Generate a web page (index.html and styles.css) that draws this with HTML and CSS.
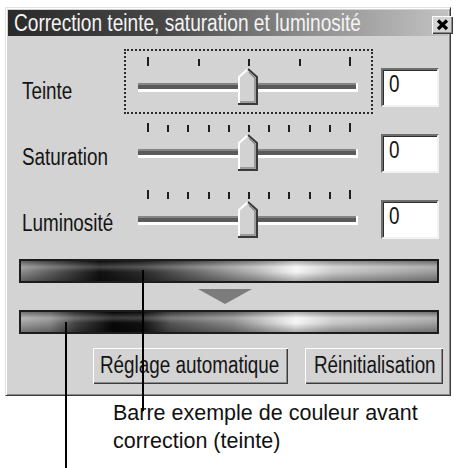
FILE: index.html
```html
<!DOCTYPE html>
<html>
<head>
<meta charset="utf-8">
<link rel="stylesheet" href="styles.css">
</head>
<body>
<div class="page">
  <div class="dialog">
    <div class="titlebar">
      <span class="title"><span class="narrow">Correction teinte, saturation et luminosité</span></span>
      <span class="close"><svg width="21" height="18" viewBox="0 0 21 18"><path d="M6 4.5 L15 13 M15 4.5 L6 13" stroke="#000" stroke-width="3.2" fill="none"/></svg></span>
    </div>
    <div class="rows">
      <div class="row">
        <div class="label"><span class="narrow">Teinte</span></div>
        <div class="slider focus">
          <svg width="249" height="65" viewBox="0 0 249 65">
            <g fill="#1e1e1e">
              <rect x="23" y="8" width="2" height="9"/>
              <rect x="74" y="10" width="2" height="7"/>
              <rect x="124" y="10" width="2" height="7"/>
              <rect x="175" y="10" width="2" height="7"/>
              <rect x="225" y="8" width="2" height="9"/>
            </g>
            <rect x="14" y="34" width="220" height="9" fill="#fff"/>
            <rect x="14" y="34" width="218" height="6" fill="#5a5a5a"/>
            <rect x="14" y="34" width="218" height="2" fill="#858585"/>
            <polygon points="114,28 124,19 134,28 134,56 114,56" fill="#d2d2d2"/>
            <polyline points="115,56 115,28 124,20" stroke="#fff" stroke-width="2" fill="none"/>
            <polyline points="124,20 133,28 133,55 114,55" stroke="#3a3a3a" stroke-width="2" fill="none"/>
            <polyline points="125,23 131,29 131,53 116,53" stroke="#8a8a8a" stroke-width="1.5" fill="none"/>
          </svg>
        </div>
        <div class="field"><span class="narrow">0</span></div>
      </div>
      <div class="row">
        <div class="label"><span class="narrow">Saturation</span></div>
        <div class="slider">
          <svg width="249" height="65" viewBox="0 0 249 65">
            <g fill="#1e1e1e">
              <rect x="23" y="8" width="2" height="9"/>
              <rect x="43" y="10" width="2" height="7"/>
              <rect x="63" y="10" width="2" height="7"/>
              <rect x="84" y="10" width="2" height="7"/>
              <rect x="104" y="10" width="2" height="7"/>
              <rect x="124" y="10" width="2" height="7"/>
              <rect x="144" y="10" width="2" height="7"/>
              <rect x="164" y="10" width="2" height="7"/>
              <rect x="185" y="10" width="2" height="7"/>
              <rect x="205" y="10" width="2" height="7"/>
              <rect x="225" y="8" width="2" height="9"/>
            </g>
            <rect x="14" y="34" width="220" height="9" fill="#fff"/>
            <rect x="14" y="34" width="218" height="6" fill="#5a5a5a"/>
            <rect x="14" y="34" width="218" height="2" fill="#858585"/>
            <polygon points="114,28 124,19 134,28 134,56 114,56" fill="#d2d2d2"/>
            <polyline points="115,56 115,28 124,20" stroke="#fff" stroke-width="2" fill="none"/>
            <polyline points="124,20 133,28 133,55 114,55" stroke="#3a3a3a" stroke-width="2" fill="none"/>
            <polyline points="125,23 131,29 131,53 116,53" stroke="#8a8a8a" stroke-width="1.5" fill="none"/>
          </svg>
        </div>
        <div class="field"><span class="narrow">0</span></div>
      </div>
      <div class="row">
        <div class="label"><span class="narrow">Luminosité</span></div>
        <div class="slider">
          <svg width="249" height="65" viewBox="0 0 249 65">
            <g fill="#1e1e1e">
              <rect x="23" y="9" width="2" height="9"/>
              <rect x="43" y="11" width="2" height="7"/>
              <rect x="63" y="11" width="2" height="7"/>
              <rect x="84" y="11" width="2" height="7"/>
              <rect x="104" y="11" width="2" height="7"/>
              <rect x="124" y="11" width="2" height="7"/>
              <rect x="144" y="11" width="2" height="7"/>
              <rect x="164" y="11" width="2" height="7"/>
              <rect x="185" y="11" width="2" height="7"/>
              <rect x="205" y="11" width="2" height="7"/>
              <rect x="225" y="9" width="2" height="9"/>
            </g>
            <rect x="14" y="35" width="220" height="9" fill="#fff"/>
            <rect x="14" y="35" width="218" height="6" fill="#5a5a5a"/>
            <rect x="14" y="35" width="218" height="2" fill="#858585"/>
            <polygon points="114,29 124,20 134,29 134,57 114,57" fill="#d2d2d2"/>
            <polyline points="115,57 115,29 124,21" stroke="#fff" stroke-width="2" fill="none"/>
            <polyline points="124,21 133,29 133,56 114,56" stroke="#3a3a3a" stroke-width="2" fill="none"/>
            <polyline points="125,24 131,30 131,54 116,54" stroke="#8a8a8a" stroke-width="1.5" fill="none"/>
          </svg>
        </div>
        <div class="field"><span class="narrow">0</span></div>
      </div>
    </div>
    <div class="bar bar-before"></div>
    <div class="arrow"></div>
    <div class="bar bar-after"></div>
    <div class="buttons">
      <div class="btn btn-auto"><span class="narrow">Réglage automatique</span></div>
      <div class="btn btn-reset"><span class="narrow">Réinitialisation</span></div>
    </div>
  </div>
  <div class="caption">Barre exemple de couleur avant<br>correction (teinte)</div>
  <div class="leader leader-before"></div>
  <div class="leader leader-after"></div>
</div>
</body>
</html>
```

FILE: styles.css
```css
html, body {
  margin: 0;
  padding: 0;
  background: #ffffff;
}

.page {
  position: relative;
  width: 454px;
  height: 468px;
  overflow: hidden;
  font-family: "Liberation Sans", Arial, sans-serif;
  color: #151515;
}

.narrow {
  display: inline-block;
  transform: scaleX(0.82);
  transform-origin: left center;
  white-space: nowrap;
}

.dialog {
  margin: 7px 0 0 5px;
  width: 446px;
  box-sizing: border-box;
  background: #d3d3d3;
  border: 1px solid;
  border-color: #e2e2e2 #3c3c3c #3c3c3c #e2e2e2;
  box-shadow: inset 1px 1px 0 #ffffff, inset -1px -1px 0 #8a8a8a;
  padding: 1px 1px 11px 1px;
}

.titlebar {
  margin: 1px 1px 0 1px;
  height: 26px;
  display: flex;
  justify-content: space-between;
  background: linear-gradient(to right, #2a2a2a 0%, #474747 35%, #8e8e8e 68%, #c2c2c2 100%);
}

.title {
  padding-left: 6px;
  font-size: 23px;
  line-height: 27px;
  color: #f4f4f4;
  white-space: nowrap;
}

.title .narrow {
  transform: scaleX(0.83);
}

.close {
  align-self: flex-end;
  margin: 0 2px 2px 0;
  width: 21px;
  height: 18px;
  box-sizing: border-box;
  background: #d3d3d3;
  box-shadow: inset 1px 1px 0 #ffffff, inset -1px -1px 0 #3c3c3c, inset -2px -2px 0 #8a8a8a;
}

.close svg {
  display: block;
}

.rows {
  margin-top: 13px;
  padding-left: 12px;
}

.row {
  display: flex;
  height: 66px;
}

.label {
  width: 102px;
  padding-left: 3px;
  padding-top: 29px;
  font-size: 23px;
  line-height: 26px;
  white-space: nowrap;
}

.slider {
  width: 249px;
  height: 65px;
}

.slider svg {
  display: block;
}

.focus {
  outline: 2px dotted #2a2a2a;
  outline-offset: -2px;
}

.field {
  margin-left: 8px;
  margin-top: 19px;
  width: 58px;
  height: 39px;
  box-sizing: border-box;
  background: #ffffff;
  border: 2px solid;
  border-color: #6e6e6e #f2f2f2 #f2f2f2 #6e6e6e;
  box-shadow: inset 1px 1px 0 #2e2e2e;
  padding: 1px 0 0 6px;
  font-size: 23px;
  line-height: 26px;
}

.bar {
  margin-left: 12px;
  width: 420px;
  height: 24px;
  box-sizing: border-box;
  border: 2px solid #1c1c1c;
}

.bar-before {
  margin-top: 12px;
  background:
    linear-gradient(to bottom, rgba(0,0,0,0.30) 0%, rgba(255,255,255,0.22) 30%, rgba(255,255,255,0) 55%, rgba(0,0,0,0.30) 100%),
    linear-gradient(to right, #8a8a8a 0%, #4a4a4a 10%, #111111 19%, #2a2a2a 29%, #707070 43%, #b8b8b8 57%, #f6f6f6 66%, #c8c8c8 75%, #9a9a9a 100%);
}

.arrow {
  margin: 6px 0 0 191px;
  width: 0;
  height: 0;
  border-left: 27px solid transparent;
  border-right: 27px solid transparent;
  border-top: 15px solid #7c7c7c;
}

.bar-after {
  margin-top: 6px;
  background:
    linear-gradient(to bottom, rgba(0,0,0,0.30) 0%, rgba(255,255,255,0.22) 30%, rgba(255,255,255,0) 55%, rgba(0,0,0,0.30) 100%),
    linear-gradient(to right, #a0a0a0 0%, #8a8a8a 7%, #444444 13%, #080808 22%, #111111 29%, #555555 36%, #8a8a8a 51%, #f6f6f6 66%, #c8c8c8 75%, #a0a0a0 100%);
}

.buttons {
  margin-top: 14px;
  display: flex;
  justify-content: flex-end;
  gap: 17px;
  padding-right: 6px;
}

.btn {
  height: 36px;
  box-sizing: border-box;
  padding-left: 7px;
  background: #d3d3d3;
  box-shadow: inset 1px 1px 0 #ffffff, inset -1px -1px 0 #3c3c3c, inset -2px -2px 0 #8a8a8a;
  font-size: 23px;
  line-height: 34px;
  white-space: nowrap;
}

.btn-auto {
  width: 195px;
}

.btn-reset {
  width: 138px;
  padding-left: 9px;
}

.caption {
  margin: 3px 0 0 113px;
  font-size: 21.5px;
  line-height: 28px;
  color: #111;
  white-space: nowrap;
}

.leader {
  position: absolute;
  width: 2px;
  background: #000;
}

.leader-before {
  left: 142px;
  top: 270px;
  height: 141px;
}

.leader-after {
  left: 65px;
  top: 322px;
  height: 146px;
}
```
